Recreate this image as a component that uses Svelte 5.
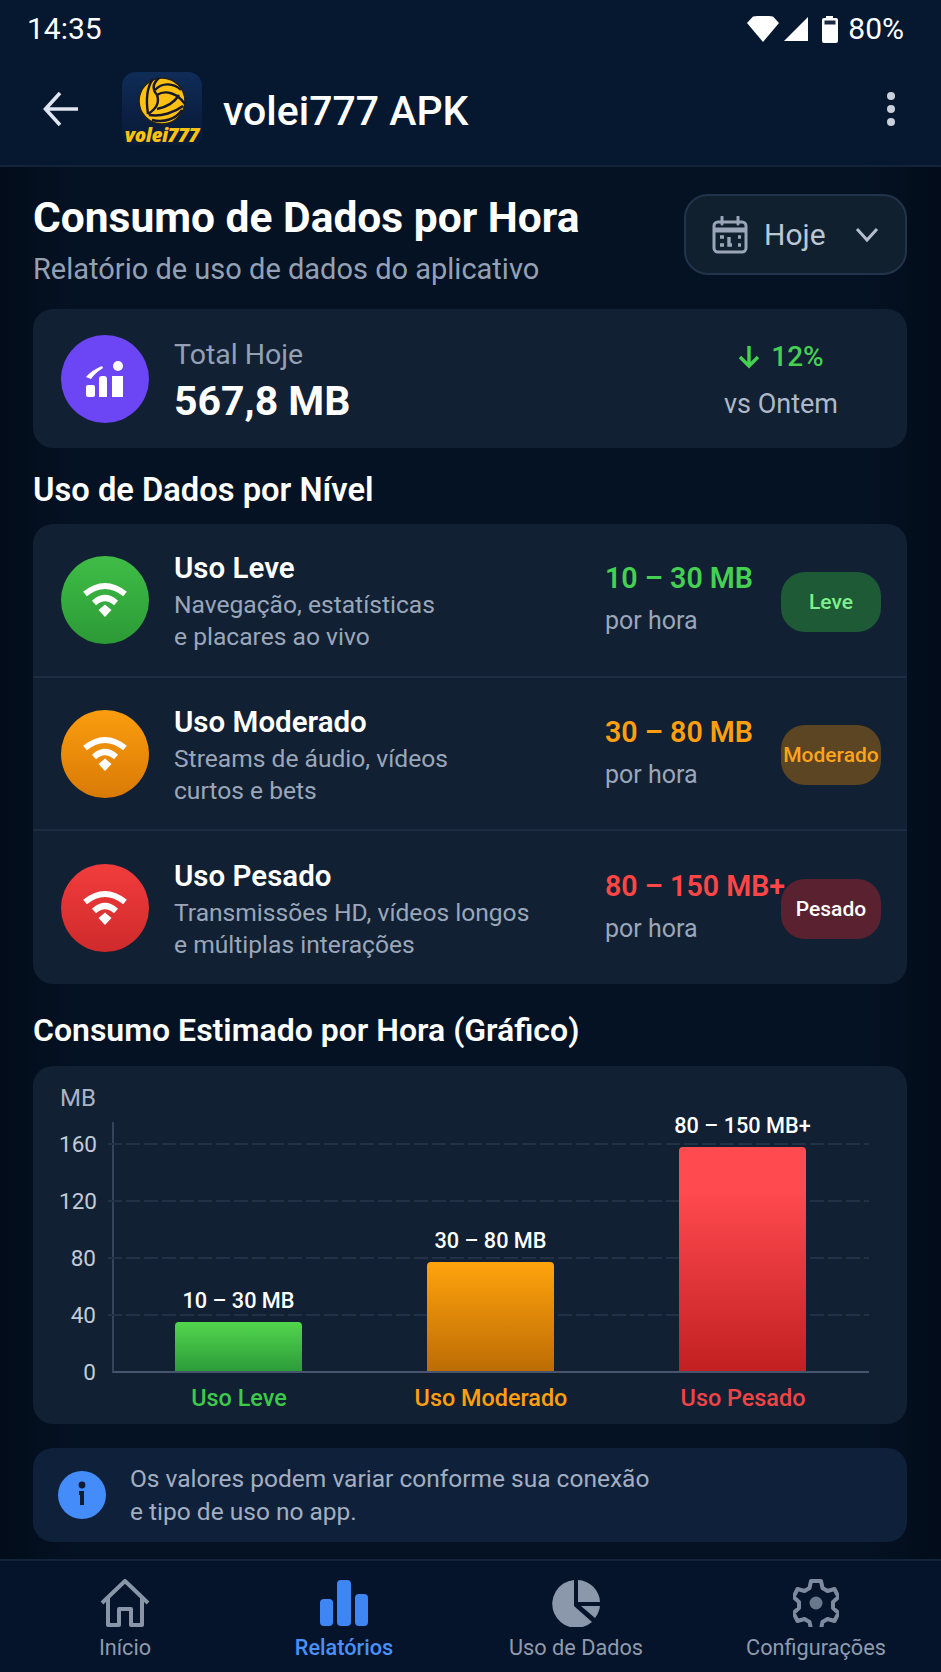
<script lang="ts">
	const levels = [
		{ key: "leve", title: "Uso Leve", l1: "Navegação, estatísticas", l2: "e placares ao vivo", range: "10 – 30 MB", badge: "Leve" },
		{ key: "mod", title: "Uso Moderado", l1: "Streams de áudio, vídeos", l2: "curtos e bets", range: "30 – 80 MB", badge: "Moderado" },
		{ key: "pes", title: "Uso Pesado", l1: "Transmissões HD, vídeos longos", l2: "e múltiplas interações", range: "80 – 150 MB+", badge: "Pesado" }
	]
	const bars = [
		{ key: "leve", label: "10 – 30 MB", name: "Uso Leve", height: 49 },
		{ key: "mod", label: "30 – 80 MB", name: "Uso Moderado", height: 109 },
		{ key: "pes", label: "80 – 150 MB+", name: "Uso Pesado", height: 224 }
	]
	const ticks = [160, 120, 80, 40, 0]
</script>

<div class="page">
	<div class="status">
		<span>14:35</span>
		<div class="status-right">
			<svg width="32" height="26" viewBox="0 0 32 26"><path d="M0 7 L6 0.5 Q16 -1 26 0.5 L32 7 L16 26 Z" fill="#fff"/></svg>
			<svg class="signal" width="26" height="26" viewBox="0 0 26 26"><path d="M25 1 V25 H1 Z" fill="#fff"/></svg>
			<svg class="battery" width="18" height="28" viewBox="0 0 18 28"><path d="M5 3 V1 h7 V3 h3 q2 0 2 2 V26 q0 2-2 2 H3 q-2 0-2-2 V5 q0-2 2-2 Z" fill="#fff"/><rect x="3.500" y="5.500" width="11" height="4" fill="#1c2b42"/></svg>
			<span class="pct">80%</span>
		</div>
	</div>

	<header>
		<svg class="back" width="36" height="36" viewBox="0 0 36 36" fill="none" stroke="#dfe6f1" stroke-width="3.600"><path d="M35 18 H3 M17 2 L2.500 18 L17 34"/></svg>
		<div class="logo">
			<svg class="ball" width="48" height="48" viewBox="0 0 48 48" fill="none" stroke="#15172a" stroke-width="2.400">
				<circle cx="24" cy="24" r="23" fill="#fdc113" stroke="#23211a" stroke-width="1.600"/>
				<path d="M17 13 C24 5 36 6 43 13"/>
				<path d="M19 18 C28 12 40 17 47 27"/>
				<path d="M15 2 C9 10 8 24 10 37"/>
				<path d="M19 18 C14 12 15 6 21 1"/>
				<path d="M19 18 C22 26 18 32 10 37"/>
				<path d="M11 38 C24 40 37 35 45 29"/>
				<path d="M19 32 C29 30 36 26 41 18"/>
				<path d="M14 43 C26 46 38 42 44 33"/>
			</svg>
			<span class="logo-text">volei777</span>
		</div>
		<span class="app-name">volei777 APK</span>
		<div class="dots"><i></i><i></i><i></i></div>
	</header>

	<main>
		<div class="title-row">
			<div>
				<h1>Consumo de Dados por Hora</h1>
				<p class="sub">Relatório de uso de dados do aplicativo</p>
			</div>
			<button class="period">
				<svg width="36" height="38" viewBox="0 0 36 38" fill="none" stroke="#9aa6b8" stroke-width="3"><rect x="2" y="6" width="32" height="30" rx="4"/><path d="M2 14 H34" stroke-width="5"/><path d="M10 1 V8 M26 1 V8" stroke-linecap="round"/><path d="M8 21 h4 M8 29 h4 M17 21 v8 h3 M26 21 h3 M26 29 h3" stroke-width="3.400"/></svg>
				<span>Hoje</span>
				<svg width="24" height="16" viewBox="0 0 24 16" fill="none" stroke="#b4bece" stroke-width="3"><path d="M2 2 L12 13 L22 2"/></svg>
			</button>
		</div>

		<section class="card total">
			<div class="circle purple">
				<svg width="40" height="36" viewBox="0 0 40 36" fill="#fff">
					<circle cx="33" cy="5" r="5"/>
					<rect x="1" y="24" width="9" height="12" rx="2"/>
					<path d="M14 18 q0-3 3-3 h2 q3 0 3 3 V36 H14 Z"/>
					<path d="M27 15 h11 V36 H27 Z"/>
					<path d="M1 16 Q7 9 17 5 L18 7 Q10 12 6 18 Z"/>
				</svg>
			</div>
			<div class="total-text">
				<span class="muted">Total Hoje</span>
				<strong>567,8 MB</strong>
			</div>
			<div class="delta">
				<span class="green">
					<svg width="22" height="24" viewBox="0 0 22 24" fill="none" stroke="#45d052" stroke-width="3.400"><path d="M11 1 V21 M2 12 L11 21 L20 12"/></svg>
					12%
				</span>
				<span class="vs">vs Ontem</span>
			</div>
		</section>

		<h2 class="levels-title">Uso de Dados por Nível</h2>

		<section class="card levels">
			{#each levels as l}
				<div class="row {l.key}">
					<div class="circle">
						<svg width="46" height="38" viewBox="0 0 46 38" fill="none" stroke="#fff" stroke-width="6">
							<path d="M3 13 Q23 -3 43 13"/>
							<path d="M12 22 Q23 12 34 22"/>
							<path d="M16.500 29 L23 23.500 L29.500 29 L23 36 Z" fill="#fff" stroke="none"/>
						</svg>
					</div>
					<div class="row-text">
						<b>{l.title}</b>
						<span>{l.l1}</span>
						<span>{l.l2}</span>
					</div>
					<div class="row-range">
						<b>{l.range}</b>
						<span>por hora</span>
					</div>
					<div class="badge">{l.badge}</div>
				</div>
			{/each}
		</section>

		<h2 class="chart-title">Consumo Estimado por Hora (Gráfico)</h2>

		<section class="card chart">
			<div class="unit">MB</div>
			<div class="chart-body">
				<div class="yaxis">
					{#each ticks as t}<span>{t}</span>{/each}
				</div>
				<div class="plot">
					{#each ticks.slice(0, 4) as t, i}
						<div class="gridline" style="top: {21 + i * 57}px"></div>
					{/each}
					<div class="bars">
						{#each bars as b}
							<div class="bar-col {b.key}">
								<span class="bar-label">{b.label}</span>
								<div class="bar" style="height: {b.height}px"></div>
							</div>
						{/each}
					</div>
				</div>
			</div>
			<div class="names">
				{#each bars as b}
					<span class={b.key}>{b.name}</span>
				{/each}
			</div>
		</section>

		<section class="info">
			<svg width="48" height="48" viewBox="0 0 48 48"><circle cx="24" cy="24" r="24" fill="#448cfa"/><circle cx="24" cy="14" r="3.400" fill="#0d1c30"/><path d="M21 20 h5 V34 h-4 V24 h-1 Z" fill="#0d1c30"/></svg>
			<p>Os valores podem variar conforme sua conexão<br />e tipo de uso no app.</p>
		</section>
	</main>

	<nav>
		<div class="tab">
			<svg width="50" height="48" viewBox="0 0 50 48" fill="none" stroke="#8a95a8" stroke-width="4" stroke-linejoin="round"><path d="M2 24 L25 2 L48 24 M8 19 V46 H19 V30 H31 V46 H42 V19"/></svg>
			<span>Início</span>
		</div>
		<div class="tab active">
			<svg width="48" height="46" viewBox="0 0 48 46" fill="#3f86f5"><rect x="0" y="19" width="13" height="27" rx="4"/><rect x="17" y="0" width="14" height="46" rx="4"/><rect x="35" y="14" width="13" height="32" rx="4"/></svg>
			<span>Relatórios</span>
		</div>
		<div class="tab">
			<svg width="50" height="48" viewBox="0 0 50 48" fill="#8b97ab"><path d="M23 1 V27 L41 43 A24 24 0 1 1 23 1 Z"/><path d="M27 1 A23 23 0 0 1 49 23 H27 Z"/><path d="M30 27 H49 A24 24 0 0 1 44 39 Z"/></svg>
			<span>Uso de Dados</span>
		</div>
		<div class="tab">
			<svg width="46" height="48" viewBox="0 0 46 48" fill="none" stroke="#7f8a9e" stroke-width="4" stroke-linejoin="round"><path d="M18 2 h10 l1.500 7 5 3 7-2 4 8-5.500 5 v6 l5.500 5-4 8-7-2-5 3-1.500 7 h-10 l-1.500-7-5-3-7 2-4-8 5.500-5 v-6 l-5.500-5 4-8 7 2 5-3 Z"/><circle cx="23" cy="24" r="6.500" fill="#6b778c" stroke="none"/></svg>
			<span>Configurações</span>
		</div>
	</nav>
</div>

<style>
	:global(body) {
		margin: 0;
		background: #030f1f;
	}
	* {
		box-sizing: border-box;
	}
	.page {
		width: 941px;
		height: 1672px;
		overflow: hidden;
		display: flex;
		flex-direction: column;
		font-family: Roboto, "Liberation Sans", sans-serif;
		color: #fff;
		background: linear-gradient(90deg, #020c1a, #051223 8%, #051223 92%, #020c1a);
	}

	.status {
		height: 55px;
		padding: 2px 37px 0 27px;
		display: flex;
		justify-content: space-between;
		align-items: center;
		font-size: 30px;
		background: #061730;
	}
	.status-right {
		display: flex;
		align-items: center;
	}
	.signal {
		margin-left: 4px;
	}
	.battery {
		margin-left: 12px;
	}
	.pct {
		margin-left: 9px;
	}

	header {
		height: 112px;
		border-bottom: 2px solid #12233b;
		background: #061730;
		display: flex;
		align-items: center;
		padding: 0 46px 0 43px;
	}
	.back {
		margin-top: -2px;
	}
	.logo {
		margin-left: 43px;
		width: 80px;
		height: 73px;
		margin-top: -3px;
		border-radius: 14px 14px 10px 10px;
		background: linear-gradient(#0f2c58, #0a1e3e 70%, #071a36);
		display: flex;
		flex-direction: column;
		align-items: center;
		position: relative;
	}
	.ball {
		margin-top: 5px;
	}
	.logo-text {
		position: absolute;
		bottom: 0;
		left: 0;
		right: 0;
		text-align: center;
		font: italic 800 19px/20px "Open Sans", sans-serif;
		letter-spacing: -0.5px;
		color: #fdc113;
		white-space: nowrap;
	}
	.app-name {
		margin-left: 21px;
		font-size: 41px;
		font-weight: 500;
		margin-top: 2px;
		flex: 1;
	}
	.dots {
		display: flex;
		flex-direction: column;
		gap: 5px;
		margin-top: -2px;
	}
	.dots i {
		width: 8px;
		height: 8px;
		border-radius: 50%;
		background: #c9d0dc;
	}

	main {
		flex: 1;
		padding: 0 34px 0 33px;
	}

	.title-row {
		display: flex;
		justify-content: space-between;
		padding-top: 27px;
		height: 142px;
	}
	h1 {
		margin: 0;
		font-size: 42.500px;
		line-height: 48px;
		font-weight: 700;
	}
	.sub {
		margin: 10px 0 0;
		font-size: 29px;
		line-height: 34px;
		color: #94a1b5;
	}
	.period {
		width: 223px;
		height: 81px;
		border-radius: 24px;
		border: 2px solid #22344c;
		background: #11202f;
		display: flex;
		align-items: center;
		padding: 0 26px;
		color: #bcc6d4;
		font: 400 30px Roboto, sans-serif;
	}
	.period span {
		margin: 0 auto 0 16px;
	}

	.card {
		background: #122033;
		border-radius: 20px;
	}
	.circle {
		width: 88px;
		height: 88px;
		border-radius: 50%;
		display: flex;
		align-items: center;
		justify-content: center;
	}
	.purple {
		background: #6c45f5;
	}

	.total {
		height: 139px;
		display: flex;
		align-items: center;
		padding: 0 69px 0 28px;
	}
	.total-text {
		margin-left: 25px;
		margin-top: 8px;
		flex: 1;
		display: flex;
		flex-direction: column;
	}
	.muted {
		font-size: 28.500px;
		line-height: 32px;
		color: #94a1b5;
	}
	.total-text strong {
		font-size: 41px;
		line-height: 50px;
		font-weight: 700;
		margin-top: 5px;
	}
	.delta {
		display: flex;
		flex-direction: column;
		align-items: center;
		gap: 15px;
		margin-top: 4px;
	}
	.green {
		font-size: 28px;
		line-height: 32px;
		font-weight: 500;
		color: #45d052;
		display: flex;
		align-items: center;
		gap: 11px;
	}
	.vs {
		font-size: 27px;
		line-height: 32px;
		color: #aeb8c9;
	}

	h2 {
		margin: 0;
		font-weight: 600;
		line-height: 36px;
	}
	.levels-title {
		font-size: 32.700px;
		padding-top: 24px;
		height: 76px;
	}

	.row {
		height: 153px;
		display: grid;
		grid-template-columns: 88px 1fr 176px 100px;
		align-items: center;
		padding: 0 26px 0 28px;
		border-top: 2px solid #1d2c41;
	}
	.row:first-child {
		border-top: 0;
		height: 152px;
	}
	.row:last-child {
		height: 155px;
	}
	.row.leve .circle {
		background: linear-gradient(#3fbd46, #2c9a36);
	}
	.row.mod .circle {
		background: linear-gradient(#fb9d0e, #d97a06);
	}
	.row.pes .circle {
		background: linear-gradient(#f23c3c, #cf2a2c);
	}
	.row-text {
		margin-left: 25px;
		display: flex;
		flex-direction: column;
		font-size: 24.600px;
		line-height: 32px;
		color: #9aa7ba;
		margin-top: 1px;
	}
	.row-text b {
		font-size: 29.500px;
		font-weight: 600;
		color: #fff;
		line-height: 41px;
	}
	.row-range {
		display: flex;
		flex-direction: column;
		font-size: 25px;
		color: #9aa7ba;
		margin-top: -5px;
	}
	.row-range b {
		font-size: 28.600px;
		font-weight: 600;
		line-height: 36px;
		margin-bottom: 10px;
		white-space: nowrap;
	}
	.leve .row-range b {
		color: #45d052;
	}
	.mod .row-range b {
		color: #ff9f10;
	}
	.pes .row-range b {
		color: #ff4646;
	}
	.badge {
		height: 60px;
		border-radius: 24px;
		display: flex;
		align-items: center;
		justify-content: center;
		font-size: 21px;
		font-weight: 500;
		white-space: nowrap;
		margin-top: 3px;
	}
	.leve .badge {
		background: #1d5a35;
		color: #7ff08c;
	}
	.mod .badge {
		background: #5b4523;
		color: #ffa41a;
	}
	.pes .badge {
		background: #5a2230;
		color: #fff;
	}

	.chart-title {
		font-size: 32px;
		padding-top: 28px;
		height: 82px;
	}
	.chart {
		height: 358px;
		padding: 18px 38px 0 26px;
	}
	.unit {
		font-size: 24px;
		line-height: 26px;
		color: #aab4c5;
		margin: 1px 0 -1px 1px;
	}
	.chart-body {
		display: flex;
		margin-top: 12px;
		height: 251px;
	}
	.yaxis {
		width: 37px;
		height: 263px;
		flex-shrink: 0;
		text-align: right;
		display: flex;
		flex-direction: column;
		justify-content: space-between;
		padding-top: 9px;
		font-size: 22.500px;
		line-height: 26px;
		color: #c2cbd8;
	}
	.plot {
		margin-left: 16px;
		width: 757px;
		height: 251px;
		border-left: 2px solid #35445a;
		border-bottom: 2px solid #46556b;
		position: relative;
	}
	.gridline {
		position: absolute;
		left: -6px;
		right: 0;
		height: 2px;
		background: repeating-linear-gradient(90deg, #223146 0 14px, transparent 14px 18px);
	}
	.bars {
		position: absolute;
		left: 61px;
		bottom: 0;
		display: flex;
		gap: 125px;
	}
	.bar-col {
		width: 127px;
		height: 249px;
		display: flex;
		flex-direction: column;
		align-items: center;
		justify-content: flex-end;
	}
	.bar-label {
		font-size: 21.700px;
		line-height: 26px;
		font-weight: 500;
		white-space: nowrap;
		margin-bottom: 8px;
		flex-shrink: 0;
	}
	.bar {
		width: 100%;
		flex-shrink: 0;
		border-radius: 4px 4px 0 0;
	}
	.leve .bar {
		background: linear-gradient(#52d64c, #2c9c3a);
	}
	.mod .bar {
		background: linear-gradient(#ffa30d, #bd6c04);
	}
	.pes .bar {
		background: linear-gradient(#ff4a4f, #ff4a4f 20%, #c22022);
	}
	.names {
		margin-top: 12px;
		padding-left: 54px;
		display: flex;
		font-size: 23.400px;
		font-weight: 500;
	}
	.names span {
		width: 252px;
		text-align: center;
		line-height: 26px;
	}
	.names .leve {
		color: #3fc94c;
	}
	.names .mod {
		color: #ff9f10;
	}
	.names .pes {
		color: #f04447;
	}

	.info {
		margin-top: 24px;
		height: 94px;
		background: #0f213a;
		border-radius: 20px;
		display: flex;
		align-items: center;
		padding-left: 25px;
		gap: 24px;
	}
	.info p {
		margin: 0;
		font-size: 24.500px;
		line-height: 33px;
		color: #a3aec0;
	}

	nav {
		height: 113px;
		border-top: 2px solid #12233b;
		background: #05142a;
		display: grid;
		grid-template-columns: 250px 188px 276px 204px;
		padding-top: 18px;
	}
	.tab {
		display: flex;
		flex-direction: column;
		align-items: center;
		gap: 8px;
		font-size: 21.700px;
		line-height: 26px;
		color: #8f9bae;
	}
	.tab svg {
		height: 48px;
	}
	.tab.active {
		color: #4a90fa;
		font-weight: 500;
	}
</style>
